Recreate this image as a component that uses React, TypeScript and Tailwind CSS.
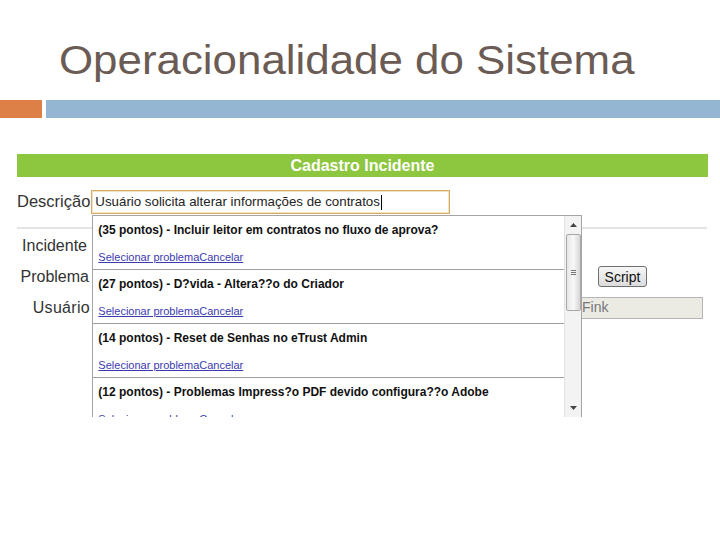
import React from "react";

const items = [
  "(35 pontos) - Incluir leitor em contratos no fluxo de aprova?",
  "(27 pontos) - D?vida - Altera??o do Criador",
  "(14 pontos) - Reset de Senhas no eTrust Admin",
  "(12 pontos) - Problemas Impress?o PDF devido configura??o Adobe",
];

function Suggestions() {
  return (
    <div className="absolute left-[1px] top-[calc(100%+1px)] w-[490px] h-[202px] flex overflow-hidden bg-white border-t border-l border-r border-[#a5a5a5] z-10">
      <div className="flex-1">
        {items.map((txt) => (
          <div key={txt} className="h-[54px] border-b border-[#a0a0a0] px-[5px] pt-[7px]">
            <div className="text-[12px] leading-[14px] font-bold text-[#111]">{txt}</div>
            <div className="mt-[13px] text-[11px] leading-[14px] text-[#3b3bb0] underline">
              Selecionar problemaCancelar
            </div>
          </div>
        ))}
      </div>
      <div className="w-[17px] bg-[#f3f3f3] border-l border-[#e2e2e2] flex flex-col items-center">
        <div className="h-[17px] w-full flex items-center justify-center">
          <svg width="7" height="4" viewBox="0 0 7 4">
            <polygon points="3.5,0 7,4 0,4" fill="#444" />
          </svg>
        </div>
        <div className="mt-[1px] h-[77px] w-[15px] rounded-[2px] border border-[#a8a8a8] bg-gradient-to-r from-[#e6e6e6] via-[#f8f8f8] to-[#d6d6d6] flex items-center justify-center">
          <div className="flex flex-col gap-[1px]">
            <div className="w-[5px] h-[1px] bg-[#777]" />
            <div className="w-[5px] h-[1px] bg-[#777]" />
            <div className="w-[5px] h-[1px] bg-[#777]" />
          </div>
        </div>
        <div className="flex-1" />
        <div className="h-[11px] w-full flex justify-center">
          <svg width="7" height="4" viewBox="0 0 7 4">
            <polygon points="0,0 7,0 3.5,4" fill="#444" />
          </svg>
        </div>
      </div>
    </div>
  );
}

export default function App() {
  return (
    <div className="w-[720px] h-[540px] bg-white overflow-hidden font-['Liberation_Sans',Arial,sans-serif]">
      {/* slide title */}
      <div className="h-[100px] pt-[40px] pl-[59px]">
        <h1 className="text-[41px] leading-none text-[#6b5b55] origin-left scale-x-[1.07]">Operacionalidade do Sistema</h1>
      </div>
      <div className="flex gap-[4px] h-[18px]">
        <div className="w-[42px] bg-[#dd8047]" />
        <div className="flex-1 bg-[#94b6d2]" />
      </div>

      {/* screenshot of the form */}
      <div className="ml-[17px] w-[691px] mt-[36px]">
        <div className="h-[23px] bg-[#8dc63f] flex items-center justify-center text-white font-bold text-[16px]">
          Cadastro Incidente
        </div>

        <div className="mt-[13px] flex items-center h-[24px]">
          <span className="text-[16.5px] text-[#333] leading-none -mt-[1px]">Descrição</span>
          <div className="relative ml-[1px]">
            <div className="w-[359px] h-[24px] border border-[#d6ad68] shadow-[inset_0_0_0_1px_#f3e2c2] flex items-center pl-[3px] text-[13.3px] text-[#222]">
              Usuário solicita alterar informações de contratos
              <span className="w-[1px] h-[15px] bg-black ml-[1px]" />
            </div>
            <Suggestions />
          </div>
        </div>

        <div className="mt-[13px] h-[2px] bg-[#e4e4e2] w-[690px]" />

        <div className="flex items-center h-[31px] mt-[1px]">
          <span className="w-[70px] text-right text-[16px] text-[#333]">Incidente</span>
        </div>
        <div className="flex items-center h-[31px]">
          <span className="w-[72px] text-right text-[16px] text-[#333]">Problema</span>
          <button className="ml-[509px] w-[49px] h-[21px] rounded-[3px] border border-[#707070] bg-gradient-to-b from-[#f6f6f6] to-[#dcdcdc] text-[14px] text-[#111] leading-none">
            Script
          </button>
        </div>
        <div className="flex items-center h-[31px]">
          <span className="w-[73px] text-right text-[16px] text-[#333] tracking-[0.3px]">Usuário</span>
          <div className="ml-[3px] w-[610px] h-[22px] border border-[#b5b5b5] bg-[#ebebe4] flex items-center pl-[488px] text-[14px] text-[#777]">
            Fink
          </div>
        </div>
      </div>
    </div>
  );
}
